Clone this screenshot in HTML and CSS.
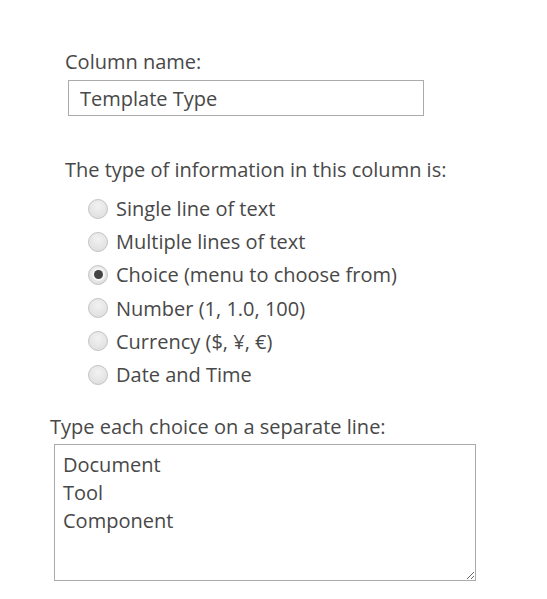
FILE: index.html
```html
<!DOCTYPE html>
<html>
<head>
<meta charset="utf-8">
<link rel="stylesheet" href="styles.css">
</head>
<body>
<div class="form">
  <div class="section name-section">
    <div class="label">Column name:</div>
    <input class="text-input" type="text" value="Template Type">
  </div>
  <div class="section type-section">
    <div class="label">The type of information in this column is:</div>
    <div class="radios">
      <label class="radio-row"><input type="radio" name="t"><span>Single line of text</span></label>
      <label class="radio-row"><input type="radio" name="t"><span>Multiple lines of text</span></label>
      <label class="radio-row"><input type="radio" name="t" checked><span>Choice (menu to choose from)</span></label>
      <label class="radio-row"><input type="radio" name="t"><span>Number (1, 1.0, 100)</span></label>
      <label class="radio-row"><input type="radio" name="t"><span>Currency ($, ¥, €)</span></label>
      <label class="radio-row"><input type="radio" name="t"><span>Date and Time</span></label>
    </div>
  </div>
  <div class="section choice-section">
    <div class="label">Type each choice on a separate line:</div>
    <textarea class="choices">Document
Tool
Component</textarea>
  </div>
</div>
</body>
</html>
```
FILE: styles.css
```css
html, body {
  margin: 0;
  padding: 0;
  background: #ffffff;
}
body {
  font-family: "Open Sans", "Noto Sans", sans-serif;
  font-size: 20px;
  color: #484848;
}
.form {
  padding: 48px 0 0 65px;
}
.label {
  line-height: 28px;
  white-space: nowrap;
}
.name-section .text-input {
  display: block;
  box-sizing: border-box;
  margin: 4px 0 0 3px;
  width: 356px;
  height: 36px;
  border: 1px solid #ababab;
  padding: 0 11px;
  font-family: inherit;
  font-size: 20px;
  color: #484848;
  outline: none;
}
.type-section {
  margin-top: 40px;
}
.radios {
  display: flex;
  flex-direction: column;
  padding: 8px 0 0 23px;
}
.radio-row {
  display: flex;
  align-items: center;
  height: 33.2px;
  gap: 8px;
}
.radio-row input {
  appearance: none;
  -webkit-appearance: none;
  margin: 0;
  width: 20px;
  height: 20px;
  border-radius: 50%;
  border: 1px solid #c4c4c4;
  background: radial-gradient(circle at 50% 35%, #f2f2f2 0%, #e2e2e2 70%, #d6d6d6 100%);
  box-sizing: border-box;
  position: relative;
  flex: none;
}
.radio-row input:checked::after {
  content: "";
  position: absolute;
  left: 50%;
  top: 50%;
  width: 9px;
  height: 9px;
  margin: -4.5px 0 0 -4.5px;
  border-radius: 50%;
  background: #444444;
  box-shadow: 0 0 0 2px #f6f6f6;
}
.choice-section {
  margin: 22px 0 0 -15px;
}
.choices {
  display: block;
  box-sizing: border-box;
  margin: 3px 0 0 4px;
  width: 422px;
  height: 137px;
  border: 1px solid #ababab;
  padding: 6px 8px;
  font-family: inherit;
  font-size: 20px;
  line-height: 28px;
  color: #484848;
  outline: none;
}
```
